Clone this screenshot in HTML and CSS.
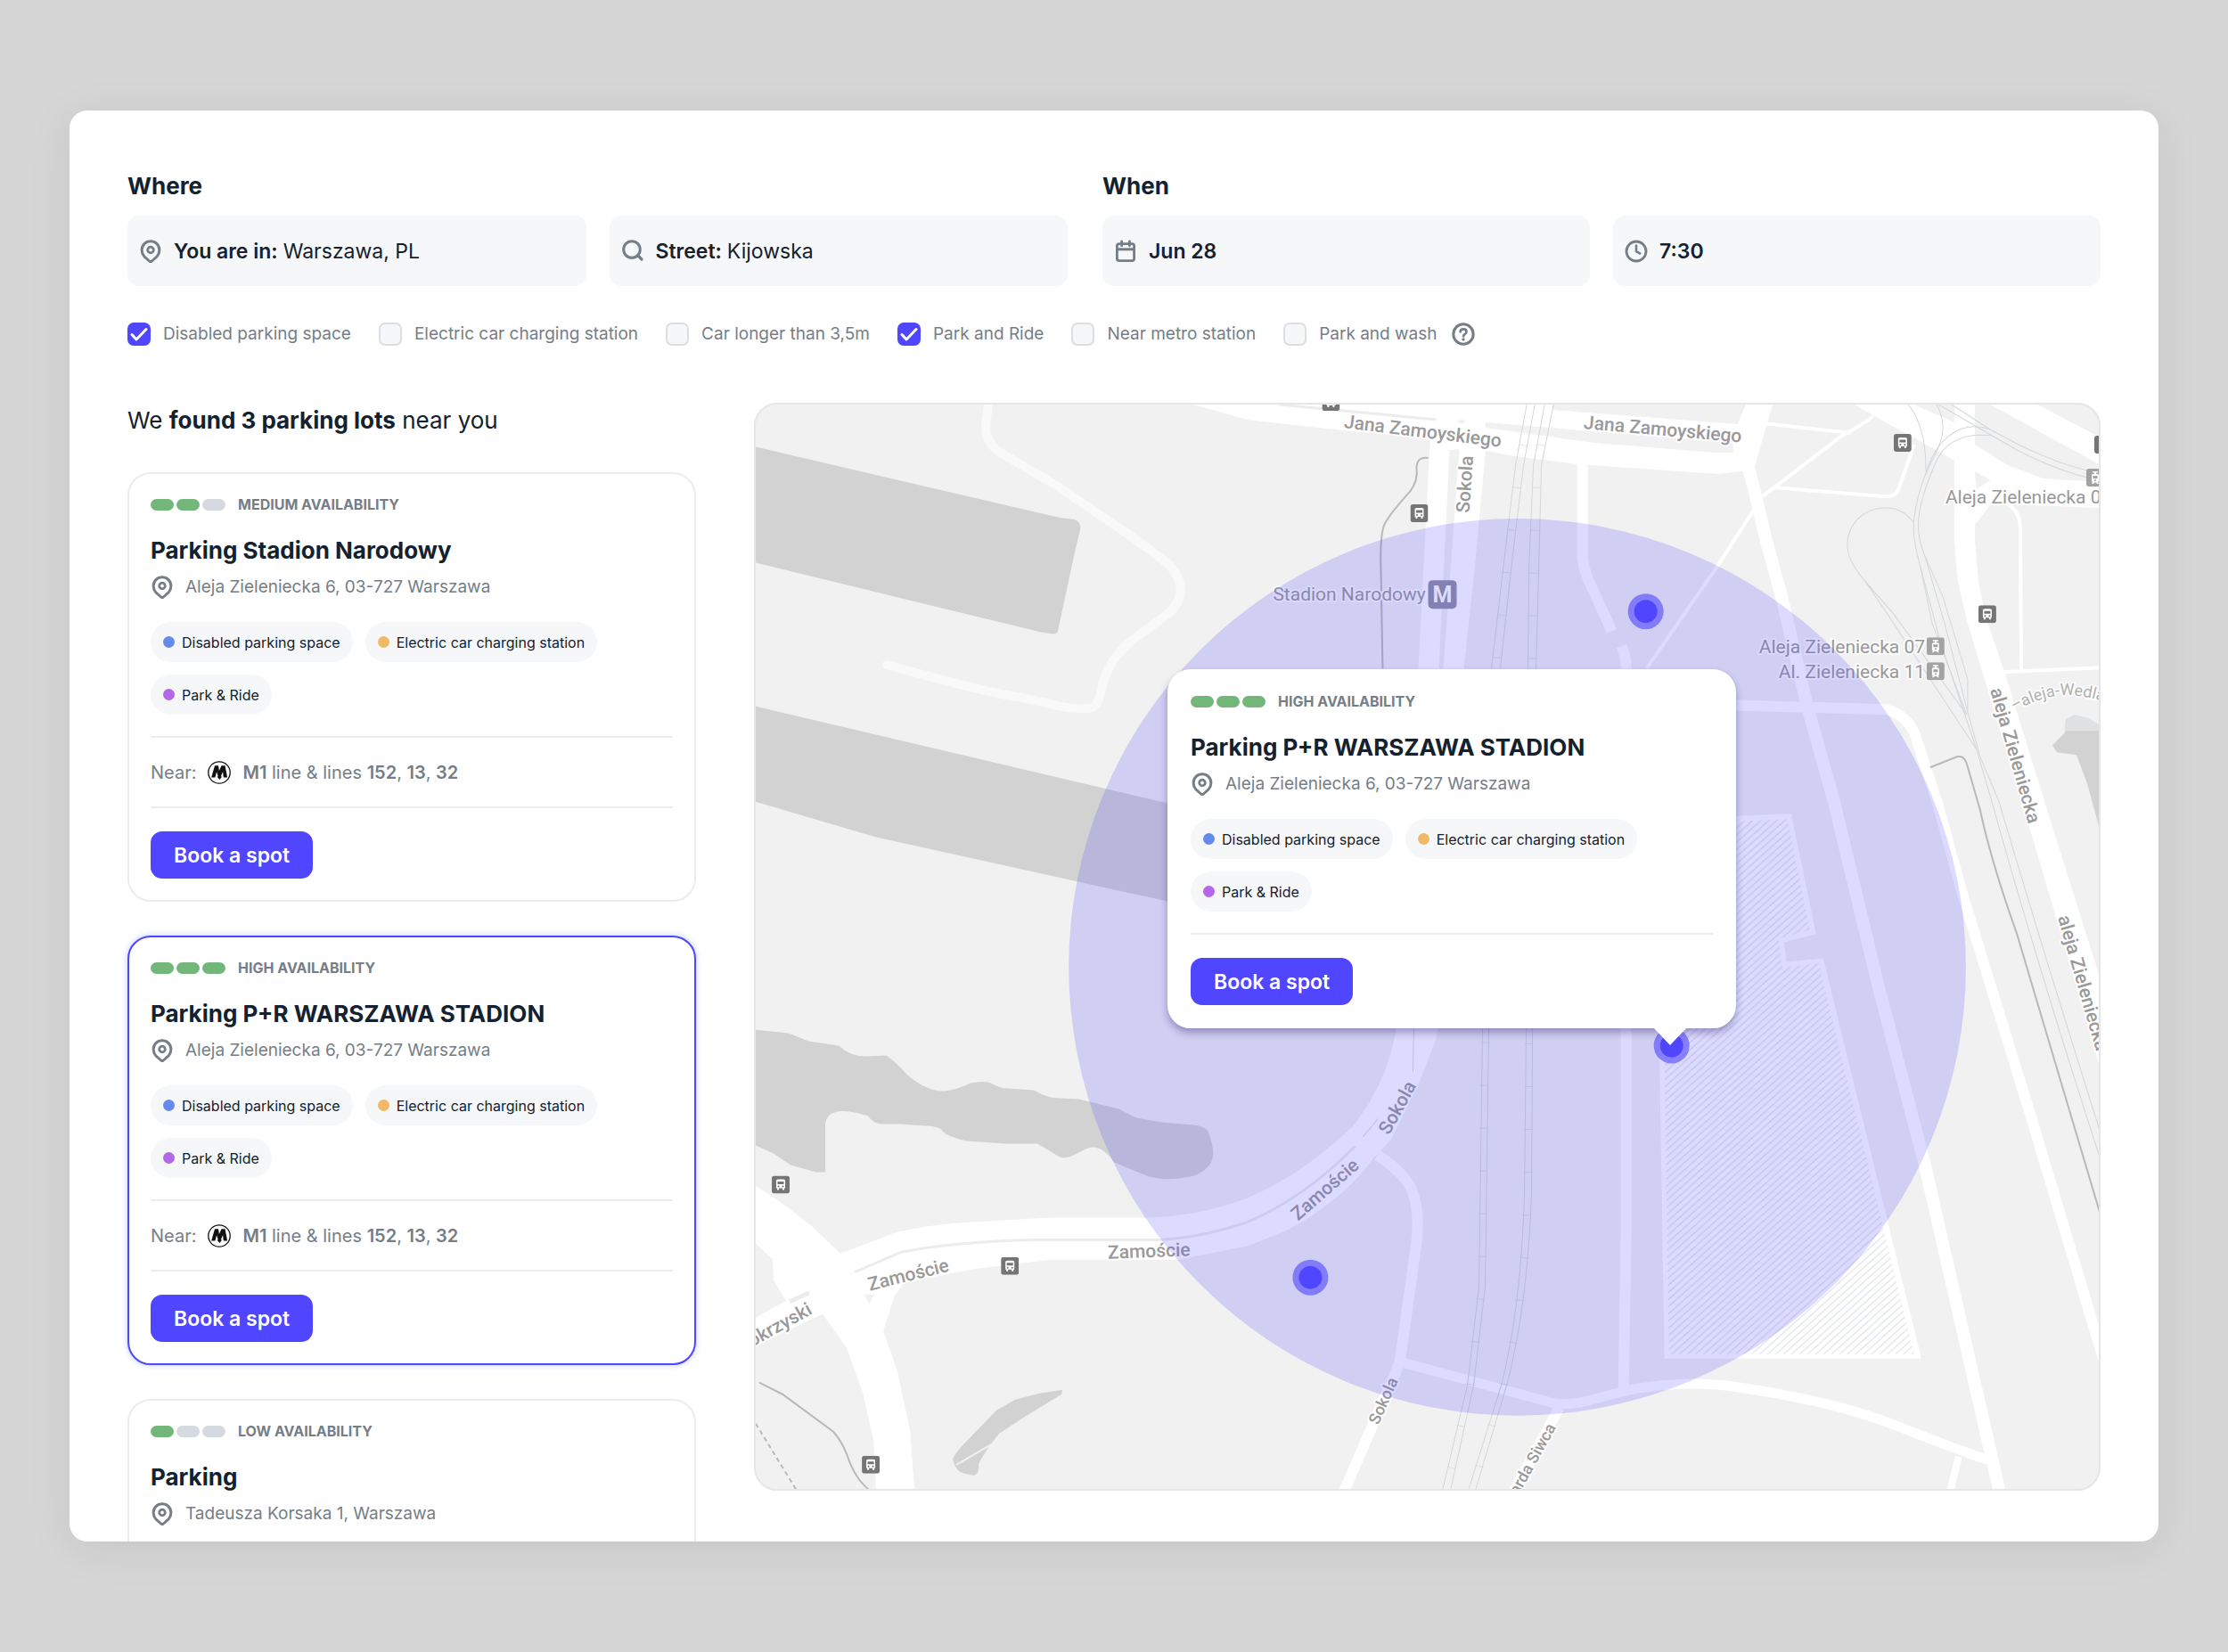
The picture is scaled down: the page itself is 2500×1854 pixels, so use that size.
FILE: index.html
```html
<!DOCTYPE html>
<html lang="en">
<head>
<meta charset="utf-8">
<meta name="viewport" content="width=device-width, initial-scale=1">
<title>Find a parking spot</title>
<link rel="stylesheet" href="styles.css">
</head>
<body>
<svg class="sprite" aria-hidden="true">
  <symbol id="i-pin" viewBox="0 0 26 26">
    <path d="M13 1.800c-5.600 0-9.900 4.300-9.900 9.800 0 5.900 4.100 8.900 9.900 13.400 5.800-4.500 9.900-7.500 9.900-13.400 0-5.500-4.300-9.800-9.900-9.800z" fill="none" stroke="currentColor" stroke-width="3" stroke-linejoin="round"/>
    <circle cx="13" cy="11.500" r="3.300" fill="none" stroke="currentColor" stroke-width="2.800"/>
  </symbol>
  <symbol id="i-search" viewBox="0 0 26 26">
    <circle cx="12" cy="11" r="9.300" fill="none" stroke="currentColor" stroke-width="3"/>
    <path d="M18.600 17.600l4.400 4.400" stroke="currentColor" stroke-width="3.200" stroke-linecap="round"/>
  </symbol>
  <symbol id="i-calendar" viewBox="0 0 26 26">
    <rect x="3.400" y="4.600" width="19.200" height="19" rx="2.400" fill="none" stroke="currentColor" stroke-width="2.800"/>
    <path d="M3.400 10.800h19.200" stroke="currentColor" stroke-width="3"/>
    <path d="M8.600 1.800v5M17.400 1.800v5" stroke="currentColor" stroke-width="2.800" stroke-linecap="round"/>
  </symbol>
  <symbol id="i-clock" viewBox="0 0 26 26">
    <circle cx="13" cy="13" r="11" fill="none" stroke="currentColor" stroke-width="2.800"/>
    <path d="M13 6.500v6.700l4.200 2.300" fill="none" stroke="currentColor" stroke-width="2.600" stroke-linecap="round" stroke-linejoin="round"/>
  </symbol>
  <symbol id="i-help" viewBox="0 0 26 26">
    <circle cx="13" cy="13" r="11.200" fill="none" stroke="currentColor" stroke-width="3"/>
    <path d="M9.600 10.300c.3-4 6.900-3.800 6.900.1 0 2.400-3.400 2.700-3.400 5" fill="none" stroke="currentColor" stroke-width="2.700" stroke-linecap="round"/>
    <circle cx="13" cy="18.900" r="1.700" fill="currentColor"/>
  </symbol>
  <symbol id="i-metro" viewBox="0 0 26 26">
    <circle cx="13" cy="13" r="12.200" fill="#fff" stroke="#111" stroke-width="1.300"/>
    <path d="M4.200 18.400L8 5.200h4l.9 5.800 2.600-5.800h4l2.600 13.200h-4.300l-.7-6.400-2.300 5.600h1.300l-2.700 3.400-3-3.400h1.400l-1.700-5.400-1.700 6.200z" fill="#111"/>
  </symbol>
  <symbol id="i-bus" viewBox="0 0 20 20">
    <rect width="20" height="20" rx="3" fill="#757575"/>
    <path d="M5 5.500Q5 4 7 4h6q2 0 2 1.500V14h-1v2h-2v-2H8v2H6v-2H5z" fill="#fff"/>
    <path d="M6.500 6.500h7v3h-7z" fill="#757575"/>
    <circle cx="7.500" cy="12" r="1" fill="#757575"/><circle cx="12.500" cy="12" r="1" fill="#757575"/>
  </symbol>
  <symbol id="i-tram" viewBox="0 0 20 20">
    <rect width="20" height="20" rx="3" fill="#a3a3a3"/>
    <path d="M7 3h6v1.500h-2V6h1.500q1.500 0 1.500 1.500V14l-1 1 1 2h-2l-1-1.500H9L8 17H6l1-2-1-1V7.500Q6 6 7.500 6H9V4.500H7z" fill="#fff"/>
    <path d="M7.500 8h5v3h-5z" fill="#a3a3a3"/><circle cx="10" cy="13" r="1" fill="#a3a3a3"/>
  </symbol>
</svg>

<main class="panel">
  <form class="search">
    <fieldset class="group group-where">
      <legend>Where</legend>
      <div class="fields">
        <label class="field"><svg class="icon"><use href="#i-pin"/></svg><strong>You are in:</strong><input type="text" value="Warszawa, PL"></label>
        <label class="field"><svg class="icon"><use href="#i-search"/></svg><strong>Street:</strong><input type="text" value="Kijowska"></label>
      </div>
    </fieldset>
    <fieldset class="group group-when">
      <legend>When</legend>
      <div class="fields">
        <label class="field"><svg class="icon"><use href="#i-calendar"/></svg><input class="strong" type="text" value="Jun 28" aria-label="Date"></label>
        <label class="field"><svg class="icon"><use href="#i-clock"/></svg><input class="strong" type="text" value="7:30" aria-label="Time"></label>
      </div>
    </fieldset>
    <div class="filters">
      <label class="check"><input type="checkbox" checked>Disabled parking space</label>
      <label class="check"><input type="checkbox">Electric car charging station</label>
      <label class="check"><input type="checkbox">Car longer than 3,5m</label>
      <label class="check"><input type="checkbox" checked>Park and Ride</label>
      <label class="check"><input type="checkbox">Near metro station</label>
      <label class="check"><input type="checkbox">Park and wash</label>
      <button class="help" type="button" aria-label="Help"><svg class="icon"><use href="#i-help"/></svg></button>
    </div>
  </form>

  <div class="content">
    <section class="results">
      <h1>We <strong>found 3 parking lots</strong> near you</h1>

      <article class="lot">
        <div class="status"><span class="bars"><i class="on"></i><i class="on"></i><i></i></span>MEDIUM AVAILABILITY</div>
        <h2>Parking Stadion Narodowy</h2>
        <p class="address"><svg class="icon"><use href="#i-pin"/></svg>Aleja Zieleniecka 6, 03-727 Warszawa</p>
        <ul class="chips"><li class="blue">Disabled parking space</li><li class="orange">Electric car charging station</li><li class="purple">Park &amp; Ride</li></ul>
        <p class="near">Near: <svg class="icon"><use href="#i-metro"/></svg><span><b>M1</b> line &amp; lines <b>152</b>, <b>13</b>, <b>32</b></span></p>
        <div class="action"><button class="book" type="button">Book a spot</button></div>
      </article>

      <article class="lot selected">
        <div class="status"><span class="bars"><i class="on"></i><i class="on"></i><i class="on"></i></span>HIGH AVAILABILITY</div>
        <h2>Parking P+R WARSZAWA STADION</h2>
        <p class="address"><svg class="icon"><use href="#i-pin"/></svg>Aleja Zieleniecka 6, 03-727 Warszawa</p>
        <ul class="chips"><li class="blue">Disabled parking space</li><li class="orange">Electric car charging station</li><li class="purple">Park &amp; Ride</li></ul>
        <p class="near">Near: <svg class="icon"><use href="#i-metro"/></svg><span><b>M1</b> line &amp; lines <b>152</b>, <b>13</b>, <b>32</b></span></p>
        <div class="action"><button class="book" type="button">Book a spot</button></div>
      </article>

      <article class="lot">
        <div class="status"><span class="bars"><i class="on"></i><i></i><i></i></span>LOW AVAILABILITY</div>
        <h2>Parking</h2>
        <p class="address"><svg class="icon"><use href="#i-pin"/></svg>Tadeusza Korsaka 1, Warszawa</p>
        <ul class="chips"></ul>
      </article>
    </section>

    <section class="map" aria-label="Map">
      <svg class="canvas" viewBox="847 453 1510 1220" preserveAspectRatio="xMidYMid slice">
        <defs>
          <pattern id="hatch" width="6" height="6" patternUnits="userSpaceOnUse" patternTransform="rotate(-42)">
            <rect width="6" height="6" fill="#fff"/><path d="M0 3h6" stroke="#e2e4e8" stroke-width="1.300"/>
          </pattern>
          <path id="wedla" d="M2260 799Q2295 780 2322 781T2375 794"/>
        </defs>
        <rect x="847" y="453" width="1510" height="1220" fill="#f1f1f1"/>

        <!-- water -->
        <g fill="#d2d2d2">
          <path d="M847 502L1190 582L1206 584Q1214 586 1213 595L1208 615L1188 708Q1187 713 1180 712L1168 710L847 632z"/>
          <path d="M847 793L1340 909V1020L1310 1012L983 940L847 900z"/>
          <path d="M847 1156L886 1160L908 1169L942 1174Q955 1186 972 1186L995 1185Q1004 1190 1019 1207Q1042 1226 1061 1225Q1076 1223 1090 1216Q1105 1213 1113 1216Q1122 1222 1132 1222L1161 1224Q1175 1233 1190 1233L1211 1234L1256 1245L1276 1255L1304 1260L1340 1263Q1354 1265 1356 1270Q1366 1295 1359 1306Q1350 1320 1330 1322Q1310 1326 1290 1321L1251 1305Q1240 1289 1229 1288Q1222 1288 1215 1292Q1196 1303 1190 1299L1165 1284L1129 1284L1085 1281Q1060 1275 1057 1268Q1050 1264 1040 1264L1011 1262L990 1262Q980 1261 975 1253Q952 1246 940 1248Q928 1251 927 1262V1316H917L888 1308L869 1295L847 1285z"/>
          <path d="M1193 1560L1167 1564L1140 1571L1119 1583L1090 1613Q1071 1632 1070 1638Q1073 1652 1083 1654L1094 1656Q1100 1654 1099 1643Q1105 1630 1122 1609L1151 1590L1192 1565z"/>
          <path d="M2328 803L2343 807L2357 815V935L2342 880L2330 848L2308 845L2303 837L2317 823L2318 808z"/>
        </g>
        <path d="M2328 803L2343 807L2357 815V821H2317L2319 808z" fill="#dfe1e2"/>
        <path d="M1074 1644L1115 1620" stroke="#f1f1f1" stroke-width="2"/>

        <!-- stadium ground -->
        <path d="M1858 920L2010 914L2038 1049L2002 1058L2005 1080L2046 1076L2156 1525H1868z" fill="#fff"/>
        <path d="M1864 926L2006 920L2031 1044L1996 1054L2000 1086L2041 1082L2148 1520H1873z" fill="url(#hatch)"/>

        <!-- roads -->
        <g fill="#fff">
          <path d="M1333 453L1400 472L1489 482L1593 492L1700 513L1771 522L1929 533L1968 528L1990 453z"/>
          <path d="M1606 480L1668 500L1655 640L1643 751L1634 900L1614 1155L1611 1169L1593 1215L1561 1280L1541 1301Q1520 1330 1489 1353Q1460 1375 1436 1385L1400 1399L1322 1414H1179L1090 1425L1015 1440L1004 1456L992 1494L1008 1540L1022 1605L1027 1673H984L981 1617L969 1563L951 1513L924 1475L847 1511V1480L883 1460L869 1437L868 1414L847 1394V1330L876 1349L911 1376L944 1407L1008 1383Q1050 1374 1090 1372L1179 1367H1286Q1345 1366 1400 1345Q1460 1320 1518 1265Q1558 1215 1567 1155L1592 751z"/>
          <path d="M2078 453H2143L2193 475V453H2216V500L2253 523L2293 538L2357 542V571L2260 567L2233 568L2216 590V607L2220 653L2228 693L2250 757L2294 900L2357 1100V1200L2308 1033L2270 905L2233 783L2207 697L2197 653L2193 607V518L2153 495L2107 470z"/>
          <path d="M2230 453H2282L2357 492V523z"/>
        </g>
        <g fill="#f1f1f1">
          <path d="M1743 453H1960L1950 477L1743 461z"/>
          <path d="M1667 475L1945 498V509H1925L1790 498L1667 481z"/>
          <path d="M1627 506L1638 505L1620 751H1615z"/>
          <path d="M2216 530L2234 540L2218 550z"/>
          <path d="M971 1453H982L976 1464z"/>
        </g>
        <g fill="none" stroke="#ececec" stroke-width="3">
          <path d="M1436 455L1612 472M1637 474H1644"/>
          <path d="M960 1428L1011 1406Q1069 1394 1161 1392H1304Q1355 1388 1400 1372Q1464 1345 1521 1287"/>
          <path d="M887 1461L909 1451" stroke-width="5"/>
          <path d="M1530 1276L1547 1256M1586 1203L1587 1155" stroke="#dcdcdc" stroke-width="1"/>
        </g>
        <g fill="none" stroke="#fff" stroke-width="12" stroke-linejoin="round">
          <path d="M1776 520V620Q1776 635 1782 650L1809 709M1820 726Q1826 740 1825 760V1380L1822 1562"/>
          <path d="M1972 453L1957 510L1966 540L1982 607L2000 673L2028 793L2058 900L2107 1104L2160 1308L2245 1680" stroke-width="14"/>
          <path d="M1940 792L2117 797Q2145 805 2152 835L2175 905L2203 1007L2280 1257L2360 1525"/>
          <path d="M1506 1680L1571 1530L1589 1402Q1596 1350 1579 1326Q1565 1308 1546 1297"/>
          <path d="M1573 1529L1740 1574Q1752 1578 1775 1574L1825 1561Q1890 1548 1950 1557Q2060 1573 2130 1601Q2190 1625 2240 1642" stroke-width="11"/>
          <path d="M1750 1580L1696 1680"/>
          <path d="M2198 1635L2188 1675" stroke-width="8"/>
          <g stroke-width="4">
            <path d="M1968 475L2077 487M2102 468Q2090 478 2067 490L1978 558M1990 548L2113 558Q2127 559 2130 551L2148 500M1970 570L1925 640Q1890 690 1848 751"/>
            <path d="M2248 755L2357 750M2253 567Q2267 575 2267 595L2268 753"/>
          </g>
        </g>
        <path d="M1110 453L1108 470Q1103 495 1122 508L1188 547L1269 602L1311 633Q1340 664 1311 690L1270 720Q1246 740 1238 768Q1234 792 1226 795Q1205 798 1180 791L1144 783Q1120 781 996 747" fill="none" stroke="#f9f9f9" stroke-width="10" stroke-linecap="round"/>

        <!-- footpaths -->
        <g fill="none" stroke="#b9b9b9" stroke-width="2">
          <path d="M1603 515Q1591 513 1590 525Q1592 540 1583 552Q1556 582 1553 592Q1549 605 1550 640L1552 751"/>
          <path d="M2166 862L2196 850Q2204 848 2207 858L2222 910Q2235 970 2263 1048L2357 1364"/>
          <path d="M853 1552L879 1565L936 1607Q945 1617 951 1632Q960 1660 977 1673"/>
          <path d="M849 1598L895 1673" stroke-dasharray="5 4"/>
        </g>

        <!-- rail and tram tracks -->
        <g fill="none" stroke="#d3d7da" stroke-width="1">
          <path d="M1714 453L1701 523L1687 640L1674 751L1664 1155L1660 1444L1647 1555L1619 1673"/>
          <path d="M1723 453L1710 523L1696 640L1684 751L1671 1155L1667 1444L1654 1555L1628 1673"/>
          <path d="M1734 453L1721 523L1716 640L1715 751L1713 1155L1711 1340Q1707 1470 1685 1555L1648 1673"/>
          <path d="M1744 453L1730 523L1727 640L1724 751L1720 1155L1719 1340Q1714 1470 1691 1555L1656 1673"/>
          <path d="M2147 587Q2135 571 2117 571C2090 571 2073 590 2073 613Q2073 630 2093 653L2125 690L2207 803M2093 653L2118 690L2218 842"/>
          <path d="M2140 453Q2162 480 2161 530M2172 453C2195 490 2162 520 2162 533M2235 490Q2185 484 2170 525C2147 580 2150 600 2160 625L2180 670L2208 763V800L2222 850L2243 900Q2290 1060 2357 1272"/>
          <path d="M2233 483C2195 470 2170 500 2160 535C2140 590 2148 610 2155 637L2177 720L2218 842L2235 900Q2285 1080 2357 1302"/>
          <path d="M2155 637L2168 700L2207 803M2160 625L2182 700L2208 800M2172 453L2265 507Q2310 530 2347 538M2187 453L2233 483L2265 500Q2310 522 2347 530"/>
        </g>
        <g fill="none" stroke="#d3d7da" stroke-width="10" stroke-dasharray="1 47" opacity=".7">
          <path d="M1718 453L1705 523L1691 640L1679 751L1667 1155L1663 1444L1650 1555L1623 1673"/>
          <path d="M1739 453L1725 523L1721 640L1719 751L1716 1155L1715 1340Q1710 1470 1688 1555L1652 1673"/>
        </g>

        <!-- stops -->
        <use href="#i-bus" x="1484" y="442" width="20" height="20"/>
        <use href="#i-bus" x="1583" y="567" width="20" height="20"/>
        <use href="#i-bus" x="2125" y="488" width="20" height="20"/>
        <use href="#i-bus" x="2220" y="680" width="20" height="20"/>
        <use href="#i-bus" x="2350" y="490" width="20" height="20"/>
        <use href="#i-bus" x="867" y="1320" width="20" height="20"/>
        <use href="#i-bus" x="1124" y="1411" width="20" height="20"/>
        <use href="#i-bus" x="968" y="1634" width="20" height="20"/>
        <use href="#i-tram" x="2341" y="527" width="20" height="20"/>
        <use href="#i-tram" x="2162" y="716" width="20" height="20"/>
        <use href="#i-tram" x="2162" y="744" width="20" height="20"/>
        <rect x="1603" y="652" width="32" height="32" rx="5" fill="#908fa0"/>
        <text class="metro-letter" x="1619" y="677">M</text>

        <!-- names -->
        <g class="names">
          <text x="1429" y="675">Stadion Narodowy</text>
          <text x="2183" y="566">Aleja Zieleniecka 07</text>
          <text x="1974" y="734">Aleja Zieleniecka 07</text>
          <text x="1996" y="762">Al. Zieleniecka 11</text>
          <text class="minor pale"><textPath href="#wedla">–aleja-Wedla</textPath></text>
        </g>
        <g class="names streets">
          <text transform="translate(1508 481) rotate(7)">Jana Zamoyskiego</text>
          <text transform="translate(1777 482) rotate(5)">Jana Zamoyskiego</text>
          <text transform="translate(1649 577) rotate(-86)">Sokola</text>
          <text transform="translate(2233 775) rotate(74)">aleja Zieleniecka</text>
          <text transform="translate(2309 1030) rotate(74)">aleja Zieleniecka</text>
          <text transform="translate(1559 1275) rotate(-61)">Sokola</text>
          <text transform="translate(1457 1371) rotate(-41)">Zamoście</text>
          <text transform="translate(977 1449) rotate(-14)">Zamoście</text>
          <text transform="translate(1244 1413) rotate(-2)">Zamoście</text>
          <text transform="translate(845 1512) rotate(-29)">okrzyski</text>
          <text class="minor" transform="translate(1547 1600) rotate(-66)">Sokola</text>
          <text class="minor" transform="translate(1704 1679) rotate(-61)">arda Siwca</text>
        </g>

        <circle cx="1703" cy="1086" r="503" fill="#5046ff" fill-opacity=".2"/>
        <g fill="#5046ff">
          <g><circle cx="1847" cy="687" r="20" fill-opacity=".6"/><circle cx="1847" cy="687" r="13"/></g>
          <g><circle cx="1876" cy="1174" r="20" fill-opacity=".6"/><circle cx="1876" cy="1174" r="13"/></g>
          <g><circle cx="1471" cy="1434" r="20" fill-opacity=".6"/><circle cx="1471" cy="1434" r="13"/></g>
        </g>
      </svg>

      <article class="lot popup">
        <div class="status"><span class="bars"><i class="on"></i><i class="on"></i><i class="on"></i></span>HIGH AVAILABILITY</div>
        <h2>Parking P+R WARSZAWA STADION</h2>
        <p class="address"><svg class="icon"><use href="#i-pin"/></svg>Aleja Zieleniecka 6, 03-727 Warszawa</p>
        <ul class="chips"><li class="blue">Disabled parking space</li><li class="orange">Electric car charging station</li><li class="purple">Park &amp; Ride</li></ul>
        <div class="action"><button class="book" type="button">Book a spot</button></div>
      </article>
    </section>
  </div>
</main>
</body>
</html>
```
FILE: styles.css
```css
* { box-sizing: border-box; }

:root {
  --ink: #14212f;
  --muted: #757e87;
  --line: #ebecee;
  --soft: #f5f7f9;
  --accent: #5046ff;
}

body {
  margin: 0;
  height: 100vh;
  padding: 124px 78px;
  background: #d6d6d6;
  color: var(--ink);
  font: 19px/26px Inter, "Liberation Sans", sans-serif;
}

h1, h2, p, ul, fieldset { margin: 0; padding: 0; border: 0; }
ul { list-style: none; }
input, button { font: inherit; color: inherit; }
strong, b { font-weight: 700; }
.sprite { position: absolute; width: 0; height: 0; }
.icon { flex: none; display: block; width: 26px; height: 26px; color: var(--muted); }

.panel {
  height: 100%;
  overflow: hidden;
  padding: 65px;
  background: #fff;
  border-radius: 20px;
  box-shadow: 0 8px 50px rgba(0, 0, 0, .08);
}

/* search */
.search {
  display: grid;
  grid-template-columns: 1055fr 1120fr;
  column-gap: 39px;
}
.group { min-width: 0; }
legend { padding: 0; font-size: 26px; line-height: 40px; font-weight: 700; }
.fields { display: grid; grid-template-columns: 1fr 1fr; gap: 26px; margin-top: 13px; }
.field {
  display: flex;
  align-items: center;
  height: 79px;
  padding: 0 13px;
  background: var(--soft);
  border-radius: 13px;
  font-size: 23px;
}
.field .icon { margin-right: 13px; }
.field input {
  flex: 1;
  min-width: 0;
  padding: 0;
  border: 0;
  outline: 0;
  background: none;
}
.field strong { font-weight: 600; }
.field strong + input { margin-left: 6px; }
.field .strong { font-weight: 600; }

.filters {
  grid-column: 1 / -1;
  display: flex;
  align-items: center;
  gap: 31px;
  margin-top: 41px;
  color: var(--muted);
}
.check { display: flex; align-items: center; gap: 14px; }
.check input {
  appearance: none;
  width: 26px;
  height: 26px;
  margin: 0;
  background: var(--soft);
  border: 2px solid #dcdfe2;
  border-radius: 7px;
}
.check input:checked {
  border-color: var(--accent);
  background: var(--accent) url("data:image/svg+xml,%3Csvg xmlns='http://www.w3.org/2000/svg' viewBox='0 0 22 22'%3E%3Cpath d='M3 11.500l5 5.500L19 5.500' fill='none' stroke='white' stroke-width='3' stroke-linecap='round' stroke-linejoin='round'/%3E%3C/svg%3E") center / 22px no-repeat;
}
.help { margin-left: -15px; padding: 0; border: 0; background: none; }

/* results */
.content {
  display: grid;
  grid-template-columns: 638px minmax(0, 1fr);
  column-gap: 65px;
  align-items: start;
  margin-top: 64px;
}
.results { display: flex; flex-direction: column; gap: 38px; }
h1 { font-size: 26px; line-height: 40px; font-weight: 400; }

.lot {
  padding: 24px;
  background: #fff;
  border: 2px solid var(--line);
  border-radius: 26px;
}
.lot.selected { border-color: var(--accent); box-shadow: 0 0 6px rgba(80, 120, 255, .4); }

.status {
  display: flex;
  align-items: center;
  gap: 14px;
  color: var(--muted);
  font-size: 16px;
  line-height: 20px;
  font-weight: 700;
}
.bars { display: flex; gap: 3px; }
.bars i { width: 26px; height: 13px; border-radius: 7px; background: #d5d9e0; }
.bars .on { background: #72b779; }

h2 { margin-top: 26px; font-size: 26px; line-height: 32px; font-weight: 700; }
.address { display: flex; align-items: center; gap: 13px; margin-top: 12px; color: var(--muted); }

.chips { display: flex; flex-wrap: wrap; gap: 14px; margin: 26px 0 24px; }
.chips li {
  display: flex;
  align-items: center;
  gap: 8px;
  height: 45px;
  padding: 0 14px;
  background: var(--soft);
  border-radius: 23px;
  font-size: 16px;
}
.chips li::before { content: ""; width: 13px; height: 13px; border-radius: 50%; background: var(--dot); }
.blue { --dot: #648bec; }
.orange { --dot: #f0b968; }
.purple { --dot: #b368ea; }

.near, .action { border-top: 2px solid var(--line); }
.near {
  display: flex;
  align-items: center;
  gap: 13px;
  padding: 26px 0 25px;
  color: var(--muted);
  font-size: 20px;
}
.near b { font-weight: 600; }
.action { padding-top: 26px; }
.book {
  height: 53px;
  padding: 0 26px;
  border: 0;
  border-radius: 13px;
  background: var(--accent);
  color: #fff;
  font-size: 23px;
  font-weight: 600;
  display: block;
}

/* map */
.map {
  position: relative;
  aspect-ratio: 151 / 122;
}
.map::after {
  content: "";
  position: absolute;
  inset: 0;
  border: 2px solid #e6e6e6;
  border-radius: 26px;
  pointer-events: none;
}
.canvas {
  display: block;
  width: 100%;
  height: 100%;
  border-radius: 26px;
}
.names {
  font: 21px Roboto, "Liberation Sans", sans-serif;
  fill: #999;
  stroke: #fff;
  stroke-opacity: .8;
  stroke-width: 4px;
  stroke-linejoin: round;
  paint-order: stroke;
}
.streets { font-weight: 500; }
.minor { font-size: 18px; }
.pale { fill: #b0b0b0; }
.metro-letter { font: 700 25px Roboto, "Liberation Sans", sans-serif; fill: #fff; text-anchor: middle; }

.popup {
  position: absolute;
  left: 464px;
  top: 299px;
  width: 638px;
  border-color: #fff;
  box-shadow: 0 5px 8px rgba(30, 20, 90, .35);
}
.popup::after {
  content: "";
  position: absolute;
  right: 52px;
  top: 100%;
  width: 40px;
  height: 21px;
  background: #fff;
  clip-path: polygon(0 0, 100% 0, 50% 100%);
}
```
